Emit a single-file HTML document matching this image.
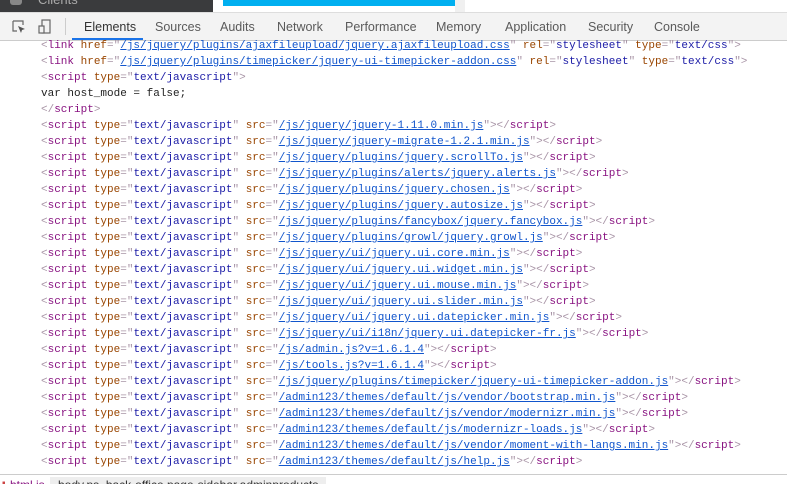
<!DOCTYPE html>
<html><head><style>
body{margin:0;width:787px;height:483px;overflow:hidden;background:#fff;position:relative;font-family:"Liberation Sans",sans-serif}
.top{position:absolute;top:0;left:0;width:787px;height:12px;background:#fff}
.tabs{position:absolute;top:12px;left:0;width:787px;height:27px;background:#f3f3f3;border-top:1px solid #ddd;border-bottom:1px solid #ccc}
.tab{position:absolute;top:7px;font-size:12.5px;color:#5a5a5a}
#code{position:absolute;top:38px;left:41px;font-family:"Liberation Mono",monospace;font-size:11px;line-height:16px;white-space:pre;color:#222}
.t{color:#881280}.b{color:#a894a6}.a{color:#994500}.v{color:#1a1aa6}.u{color:#1155cc;text-decoration:underline}
.bot{position:absolute;top:474px;left:0;width:787px;height:9px;border-top:1px solid #ccc;background:#fff;font-size:12px;overflow:hidden}
</style></head><body>
<div class="top">
<div style="position:absolute;left:0;top:0;width:213px;height:12px;background:#3a3b3d"></div>
<div style="position:absolute;left:10px;top:-3px;width:12px;height:8px;background:#888;border-radius:3px"></div>
<div style="position:absolute;left:38px;top:-8px;font-size:13px;color:#aaa">Clients</div>
<div style="position:absolute;left:223px;top:0;width:232px;height:6px;background:#00aff0"></div>
<div style="position:absolute;left:455px;top:0;width:10px;height:12px;background:#f0f0f0"></div>
</div>
<div class="tabs">
<svg style="position:absolute;left:12px;top:7px" width="14" height="14" viewBox="0 0 14 14"><path d="M1 1h10v4M1 1v10h4" fill="none" stroke="#666" stroke-width="1.2"/><path d="M6 6l7 3-3 1-1 3z" fill="#555"/></svg>
<svg style="position:absolute;left:38px;top:6px" width="14" height="16" viewBox="0 0 14 16"><rect x="4" y="1" width="8" height="13" fill="none" stroke="#666" stroke-width="1.2"/><rect x="1" y="7" width="5" height="7" fill="#f3f3f3" stroke="#666" stroke-width="1.2"/></svg>
<div style="position:absolute;left:65px;top:5px;width:1px;height:17px;background:#ccc"></div>
<span class="tab" style="left:84px;color:#333">Elements</span>
<div style="position:absolute;left:72px;top:25px;width:71px;height:2px;background:#1a73e8"></div>
<span class="tab" style="left:155px">Sources</span>
<span class="tab" style="left:220px">Audits</span>
<span class="tab" style="left:277px">Network</span>
<span class="tab" style="left:345px">Performance</span>
<span class="tab" style="left:436px">Memory</span>
<span class="tab" style="left:505px">Application</span>
<span class="tab" style="left:588px">Security</span>
<span class="tab" style="left:654px">Console</span>
</div>
<div id="code"><span class="b">&lt;</span><span class="t">link</span> <span class="a">href</span><span class="b">="</span><span class="u">/js/jquery/plugins/ajaxfileupload/jquery.ajaxfileupload.css</span><span class="b">"</span> <span class="a">rel</span><span class="b">="</span><span class="v">stylesheet</span><span class="b">"</span> <span class="a">type</span><span class="b">="</span><span class="v">text/css</span><span class="b">"&gt;</span>
<span class="b">&lt;</span><span class="t">link</span> <span class="a">href</span><span class="b">="</span><span class="u">/js/jquery/plugins/timepicker/jquery-ui-timepicker-addon.css</span><span class="b">"</span> <span class="a">rel</span><span class="b">="</span><span class="v">stylesheet</span><span class="b">"</span> <span class="a">type</span><span class="b">="</span><span class="v">text/css</span><span class="b">"&gt;</span>
<span class="b">&lt;</span><span class="t">script</span> <span class="a">type</span><span class="b">="</span><span class="v">text/javascript</span><span class="b">"&gt;</span>
var host_mode = false;
<span class="b">&lt;/</span><span class="t">script</span><span class="b">&gt;</span>
<span class="S">/js/jquery/jquery-1.11.0.min.js</span>
<span class="S">/js/jquery/jquery-migrate-1.2.1.min.js</span>
<span class="S">/js/jquery/plugins/jquery.scrollTo.js</span>
<span class="S">/js/jquery/plugins/alerts/jquery.alerts.js</span>
<span class="S">/js/jquery/plugins/jquery.chosen.js</span>
<span class="S">/js/jquery/plugins/jquery.autosize.js</span>
<span class="S">/js/jquery/plugins/fancybox/jquery.fancybox.js</span>
<span class="S">/js/jquery/plugins/growl/jquery.growl.js</span>
<span class="S">/js/jquery/ui/jquery.ui.core.min.js</span>
<span class="S">/js/jquery/ui/jquery.ui.widget.min.js</span>
<span class="S">/js/jquery/ui/jquery.ui.mouse.min.js</span>
<span class="S">/js/jquery/ui/jquery.ui.slider.min.js</span>
<span class="S">/js/jquery/ui/jquery.ui.datepicker.min.js</span>
<span class="S">/js/jquery/ui/i18n/jquery.ui.datepicker-fr.js</span>
<span class="S">/js/admin.js?v=1.6.1.4</span>
<span class="S">/js/tools.js?v=1.6.1.4</span>
<span class="S">/js/jquery/plugins/timepicker/jquery-ui-timepicker-addon.js</span>
<span class="S">/admin123/themes/default/js/vendor/bootstrap.min.js</span>
<span class="S">/admin123/themes/default/js/vendor/modernizr.min.js</span>
<span class="S">/admin123/themes/default/js/modernizr-loads.js</span>
<span class="S">/admin123/themes/default/js/vendor/moment-with-langs.min.js</span>
<span class="S">/admin123/themes/default/js/help.js</span></div>
<script>
document.querySelectorAll('.S').forEach(function(e){var s=e.textContent;e.outerHTML='<span class="b">&lt;</span><span class="t">script</span> <span class="a">type</span><span class="b">="</span><span class="v">text/javascript</span><span class="b">"</span> <span class="a">src</span><span class="b">="</span><span class="u">'+s+'</span><span class="b">"&gt;&lt;/</span><span class="t">script</span><span class="b">&gt;</span>';});
</script>
<div class="bot">
<span style="position:absolute;left:2px;top:3px;color:#c44;font-size:10px">▪</span>
<span style="position:absolute;left:10px;top:3px;color:#881280">html.js</span>
<span style="position:absolute;left:50px;top:2px;padding:1px 8px;background:#eee;color:#333">body.ps_back-office.page-sidebar.adminproducts</span>
</div>
</body></html>
